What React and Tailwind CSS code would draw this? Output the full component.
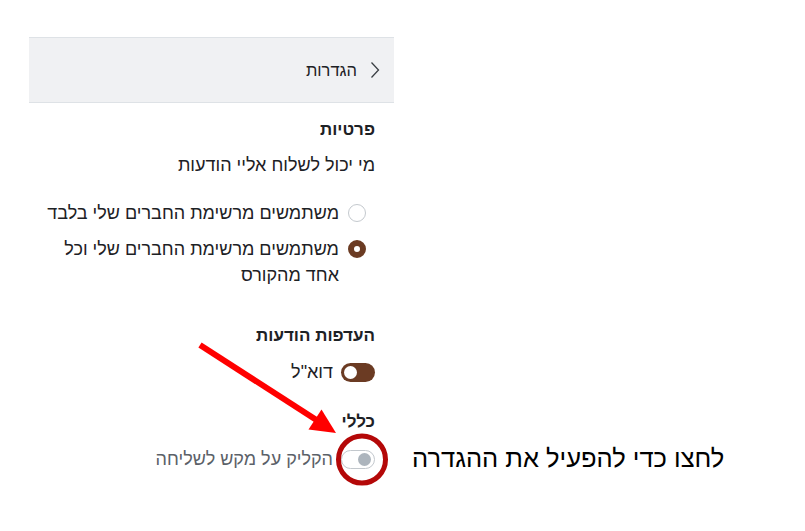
import React from "react";

function Radio({ checked }) {
  return checked ? (
    <span className="mt-[4px] block h-[18px] w-[18px] shrink-0 rounded-full border-[6px] border-[#6b3b23] bg-white" />
  ) : (
    <span className="mt-[4px] block h-[18px] w-[18px] shrink-0 rounded-full border-[1.5px] border-[#c4c9ce] bg-white" />
  );
}

function Toggle({ on }) {
  return on ? (
    <span className="flex h-[19px] w-[34px] shrink-0 items-center justify-end rounded-full bg-[#6b3b23] px-[3px]">
      <span className="block h-[13px] w-[13px] rounded-full bg-white" />
    </span>
  ) : (
    <span className="flex h-[19px] w-[34px] shrink-0 items-center justify-start rounded-full border border-[#c3c8cd] bg-white px-[3px]">
      <span className="block h-[13px] w-[13px] rounded-full bg-[#adb5bd]" />
    </span>
  );
}

export default function App() {
  return (
    <div
      className="relative h-[531px] w-[805px] overflow-hidden bg-white text-[#1d2125]"
      style={{ fontFamily: '"Liberation Sans", Arial, sans-serif' }}
    >
      <div className="pt-[37px] pl-[29px]">
        <div dir="rtl" className="w-[365px]">
          <div className="flex h-[66px] items-center gap-[13px] border-y border-[#dee2e6] bg-[#f0f1f3] pr-[14px]">
            <svg width="10" height="18" viewBox="0 0 10 18" className="shrink-0">
              <path d="M1.5 1.5 L8.5 9 L1.5 16.5" fill="none" stroke="#3a3f44" strokeWidth="1.3" />
            </svg>
            <span className="text-[16.5px] leading-[22px]">הגדרות</span>
          </div>

          <div className="pr-[19px]">
            <div className="mt-[17px] text-[17px] font-bold leading-[20px]">פרטיות</div>
            <div className="mt-[14px] text-[18px] leading-[22px]">מי יכול לשלוח אליי הודעות</div>

            <div className="pr-[9px]">
              <div className="mt-[24px] flex items-start gap-[9px]">
                <Radio checked={false} />
                <span className="w-[296px] text-[18px] leading-[26px]">משתמשים מרשימת החברים שלי בלבד</span>
              </div>
              <div className="mt-[10px] flex items-start gap-[9px]">
                <Radio checked={true} />
                <span className="w-[296px] text-[18px] leading-[26px]">
                  משתמשים מרשימת החברים שלי וכל אחד מהקורס
                </span>
              </div>
            </div>

            <div className="mt-[38px] text-[17px] font-bold leading-[20px]">העדפות הודעות</div>
            <div className="mt-[15px] flex h-[22px] items-center gap-[8px]">
              <Toggle on={true} />
              <span className="text-[18px] leading-[22px]">דוא"ל</span>
            </div>

            <div className="mt-[29px] text-[17px] font-bold leading-[20px]">כללי</div>
            <div className="mt-[16px] flex h-[22px] items-center gap-[8px]">
              <Toggle on={false} />
              <span className="text-[18px] leading-[22px] text-[#5b6168]">הקליק על מקש לשליחה</span>
            </div>
          </div>
        </div>
      </div>

      <svg
        className="pointer-events-none absolute left-0 top-0"
        width="805"
        height="531"
        viewBox="0 0 805 531"
      >
        <line x1="200" y1="345" x2="318" y2="421" stroke="#ff0000" strokeWidth="6" />
        <polygon points="336,433 308.5,429.6 321.5,409.4" fill="#ff0000" />
        <circle cx="362" cy="459.5" r="23.5" fill="none" stroke="#b40808" strokeWidth="5" />
      </svg>

      <div
        dir="rtl"
        className="absolute left-[412px] top-[441px] text-[25.5px] leading-[34px] text-black"
        style={{ fontFamily: '"Liberation Sans", Arial, sans-serif' }}
      >
        לחצו כדי להפעיל את ההגדרה
      </div>
    </div>
  );
}
